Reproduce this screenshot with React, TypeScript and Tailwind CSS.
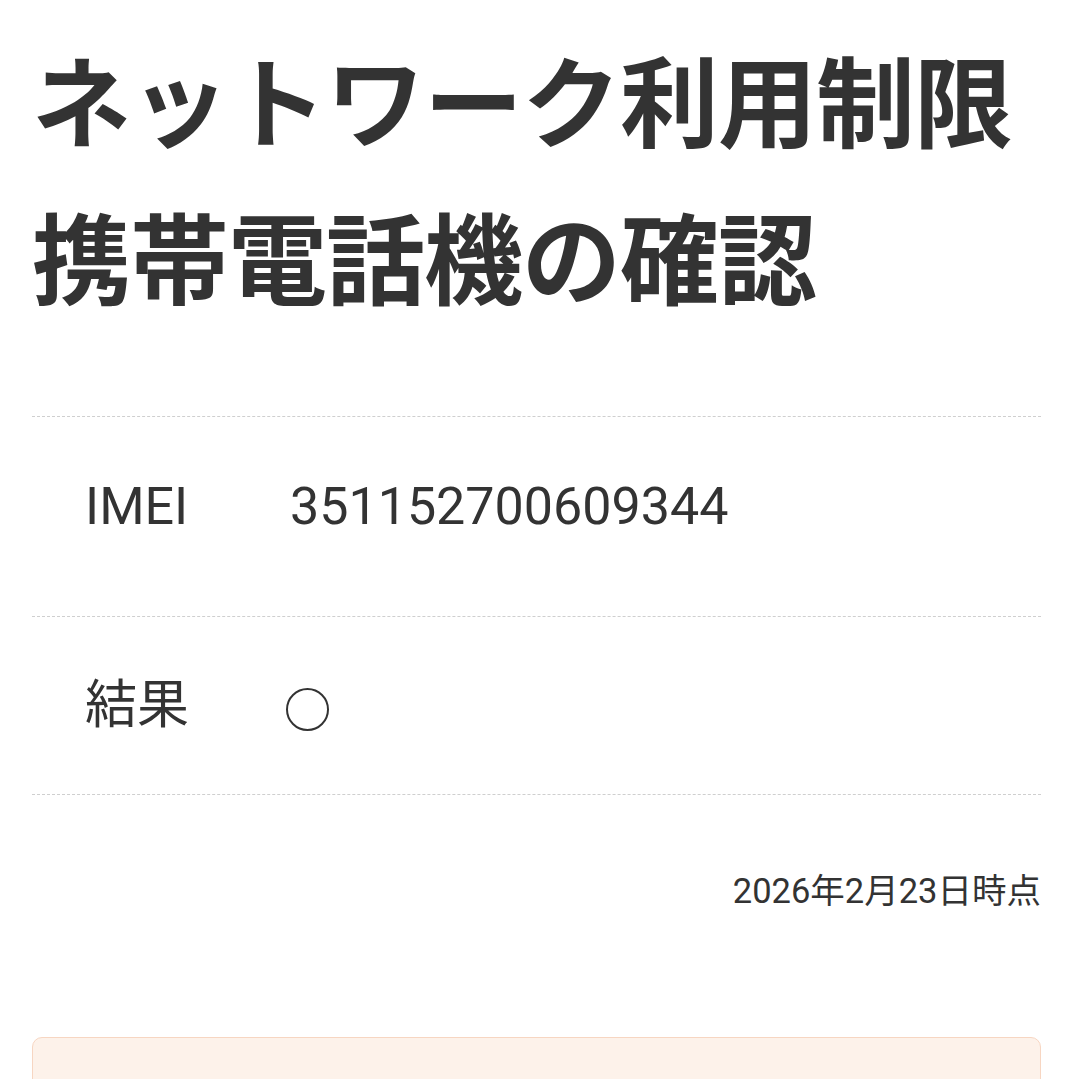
import React from 'react'

const font = { fontFamily: 'Roboto, "Noto Sans CJK JP", sans-serif' }

function Row({ label, children, h }: { label: string; children: React.ReactNode; h: string }) {
  return (
    <div className={`flex items-center border-b border-dashed border-[#cfcfcf] ${h}`}>
      <div className="w-[258px] pl-[53px] text-[52px] text-[#333]">{label}</div>
      <div className="text-[52px] text-[#333]">{children}</div>
    </div>
  )
}

export default function App() {
  return (
    <div className="h-[1079px] overflow-hidden bg-white pl-[32px] pr-[38px] pt-[28px]" style={font}>
      <h1 className="text-[99px] font-bold leading-[157px] tracking-[-1px] text-[#333]">
        ネットワーク利用制限
        <br />
        携帯電話機の確認
      </h1>

      <div className="mt-[74px] border-t border-dashed border-[#cfcfcf]">
        <Row label="IMEI" h="h-[200px] pb-[20px]">351152700609344</Row>
        <Row label="結果" h="h-[178px]">
          <span className="ml-[-4px] inline-block h-[43px] w-[43px] translate-y-[1px] rounded-full border-[2.5px] border-[#333] align-middle" />
        </Row>
      </div>

      <div className="mt-[72px] text-right text-[34.5px] leading-[48px] text-[#333]">2026年2月23日時点</div>

      <div className="mt-[122px] h-[120px] rounded-[10px] border border-[#f7d6c2] bg-[#fdf2ea]" />
    </div>
  )
}
